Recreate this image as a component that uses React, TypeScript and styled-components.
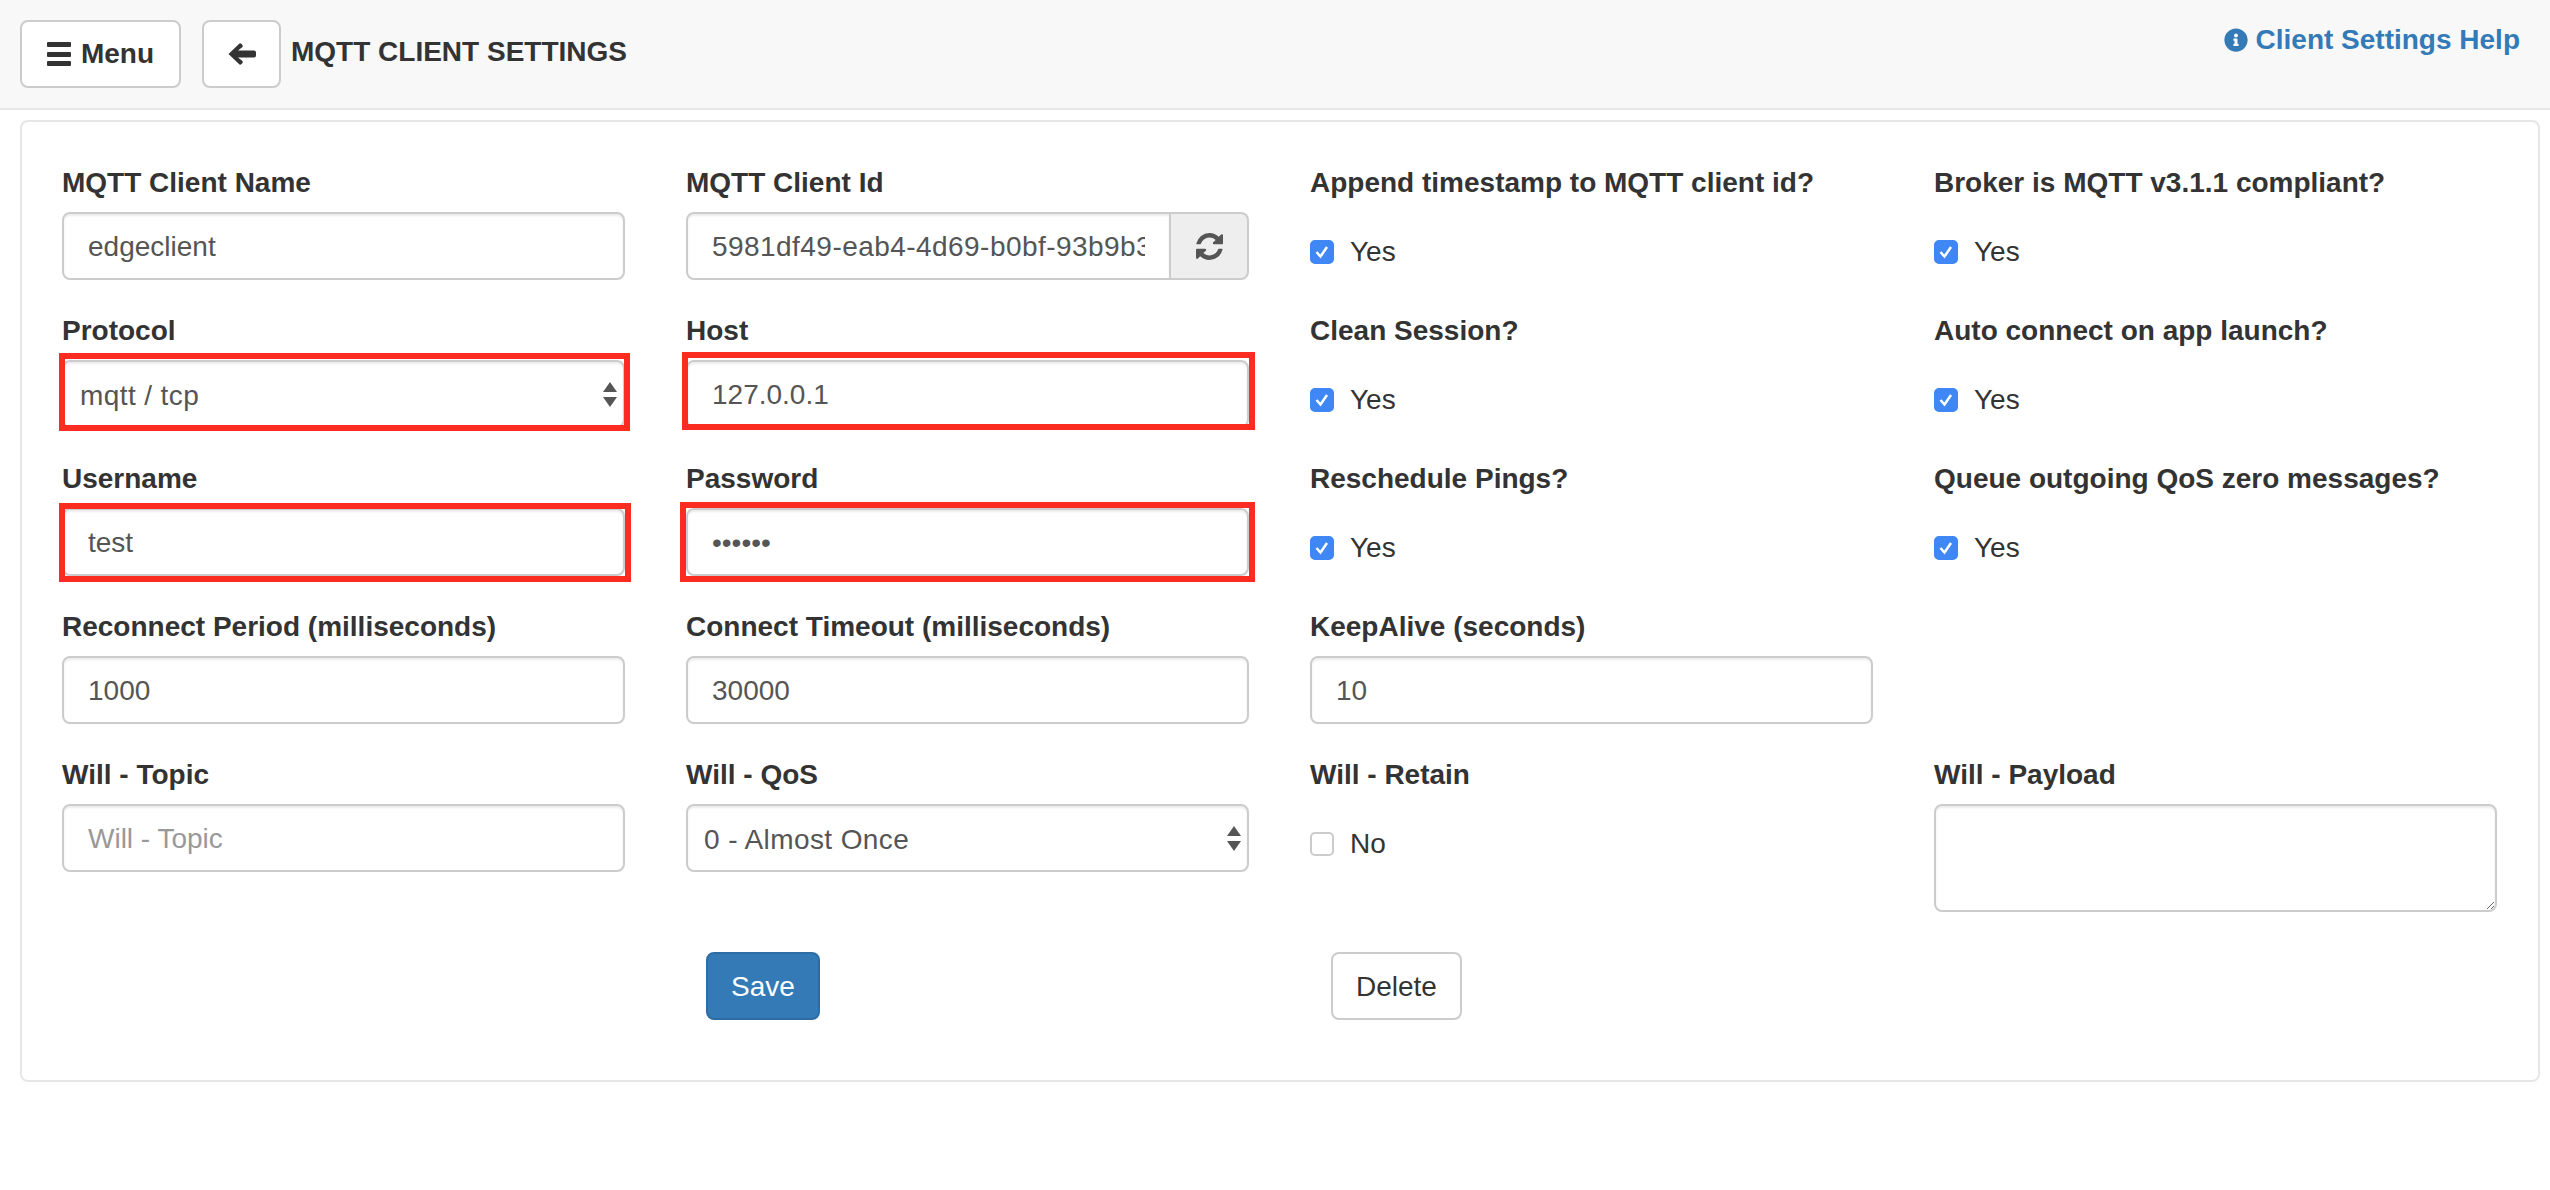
import React from "react";
import styled, { createGlobalStyle } from "styled-components";
import { FaInfoCircle } from "react-icons/fa";

const GlobalStyle = createGlobalStyle`
  html, body {
    margin: 0;
    background: #fff;
    font-family: "Liberation Sans", Arial, sans-serif;
    font-size: 28px;
    color: #333;
  }
  * { box-sizing: border-box; }
`;

const Header = styled.header`
  display: flex;
  align-items: flex-start;
  height: 110px;
  padding: 20px 30px 0 20px;
  background: #f8f8f8;
  border-bottom: 2px solid #e7e7e7;
`;

const NavButton = styled.button<{ $width: number; $gap: number }>`
  display: flex;
  align-items: center;
  justify-content: center;
  gap: 10px;
  width: ${(p) => p.$width}px;
  height: 68px;
  margin-right: ${(p) => p.$gap}px;
  padding: 0;
  background: #fff;
  border: 2px solid #ccc;
  border-radius: 8px;
  color: #333;
  font: bold 28px "Liberation Sans", Arial, sans-serif;
`;

const Title = styled.h1`
  margin: 0;
  font-size: 28px;
  line-height: 64px;
  font-weight: bold;
  color: #333;
`;

const HelpLink = styled.a`
  display: flex;
  align-items: center;
  gap: 8px;
  margin-left: auto;
  line-height: 40px;
  font-weight: bold;
  color: #337ab7;
  text-decoration: none;
`;

const Card = styled.main`
  margin: 10px 10px 0 20px;
  padding: 40px 41px 60px 40px;
  border: 2px solid #e6e6e6;
  border-radius: 8px;
`;

const FormGrid = styled.div`
  display: grid;
  grid-template-columns: repeat(4, 1fr);
  column-gap: 61px;
`;

const Field = styled.div`
  margin-bottom: 30px;
`;

const Label = styled.label`
  display: block;
  margin-bottom: 8px;
  font-weight: bold;
  line-height: 42px;
  white-space: nowrap;
`;

const Control = styled.div`
  position: relative;
  display: flex;
`;

const TextInput = styled.input<{ $joined?: boolean }>`
  display: block;
  flex: 1;
  min-width: 0;
  width: 100%;
  height: 68px;
  padding: 13px 24px 11px;
  background: #fff;
  border: 2px solid #ccc;
  border-radius: ${(p) => (p.$joined ? "8px 0 0 8px" : "8px")};
  box-shadow: inset 0 2px 2px rgba(0, 0, 0, 0.075);
  color: #555;
  font: 28px "Liberation Sans", Arial, sans-serif;
  letter-spacing: ${(p) => (p.$joined ? "0.45px" : "normal")};
  outline: none;
  &::placeholder { color: #999; opacity: 1; }
`;

const Select = styled.select`
  display: block;
  width: 100%;
  height: 68px;
  padding: 13px 40px 11px 16px;
  appearance: none;
  background: #fff;
  border: 2px solid #ccc;
  border-radius: 8px;
  box-shadow: inset 0 2px 2px rgba(0, 0, 0, 0.075);
  color: #555;
  font: 28px "Liberation Sans", Arial, sans-serif;
  letter-spacing: 0.4px;
  outline: none;
`;

const SelectArrows = styled.svg`
  position: absolute;
  top: 22px;
  right: 8px;
  width: 14px;
  height: 25px;
  fill: #555;
  pointer-events: none;
`;

const Addon = styled.span`
  display: flex;
  align-items: center;
  justify-content: center;
  flex: 0 0 78px;
  background: #eee;
  border: 2px solid #ccc;
  border-left: 0;
  border-radius: 0 8px 8px 0;
  color: #555;
`;

const Textarea = styled.textarea`
  display: block;
  width: 100%;
  height: 108px;
  padding: 12px 24px;
  background: #fff;
  border: 2px solid #ccc;
  border-radius: 8px;
  box-shadow: inset 0 2px 2px rgba(0, 0, 0, 0.075);
  font: 28px "Liberation Sans", Arial, sans-serif;
  outline: none;
`;

const CheckRow = styled.div`
  display: flex;
  align-items: center;
  gap: 16px;
  height: 40px;
  margin-top: 28px;
  line-height: 40px;
`;

const CheckBox = styled.span<{ $checked: boolean }>`
  display: flex;
  align-items: center;
  justify-content: center;
  width: 24px;
  height: 24px;
  background: ${(p) => (p.$checked ? "#3f87f5" : "#fff")};
  border: 2px solid ${(p) => (p.$checked ? "#3f87f5" : "#ccc")};
  border-radius: 5px;
`;

// red annotation rectangle drawn over the screenshot's required fields
const Marker = styled.span<{ $top: number; $right: number; $bottom: number; $left: number }>`
  position: absolute;
  top: ${(p) => p.$top}px;
  right: ${(p) => p.$right}px;
  bottom: ${(p) => p.$bottom}px;
  left: ${(p) => p.$left}px;
  border: 6px solid #fc2d20;
  pointer-events: none;
`;

const ActionCell = styled.div<{ $offset: number }>`
  margin-top: 10px;
  padding-left: ${(p) => p.$offset}px;
`;

const ActionButton = styled.button<{ $primary?: boolean }>`
  height: 68px;
  padding: 2px 23px 0;
  background: ${(p) => (p.$primary ? "#337ab7" : "#fff")};
  border: 2px solid ${(p) => (p.$primary ? "#2e6da4" : "#ccc")};
  border-radius: 8px;
  color: ${(p) => (p.$primary ? "#fff" : "#333")};
  font: 28px "Liberation Sans", Arial, sans-serif;
`;

const BarsIcon = () => (
  <svg width="24" height="24" viewBox="0 0 24 24" fill="#333">
    <rect y="0" width="24" height="5" rx="1" />
    <rect y="10" width="24" height="5" rx="1" />
    <rect y="19" width="24" height="5" rx="1" />
  </svg>
);

const BackIcon = () => (
  <svg width="28" height="22" viewBox="0 0 28 22" fill="#333">
    <path d="M0.5 11 11.5 0.5Q12.5 0 13.5 1L14.5 2Q15 3 14.5 4L10 7.5H26Q28 7.5 28 9.5V12.5Q28 14.5 26 14.5H10L14.5 18Q15 19 14.5 20L13.5 21Q12.5 22 11.5 21.5Z" />
  </svg>
);

const RefreshIcon = () => (
  <svg width="27" height="27" viewBox="0 0 1536 1536" fill="#555">
    <path d="M1511 928q0 5-1 7-64 268-268 434.5t-478 166.5q-146 0-282.5-55t-243.5-157l-129 129q-19 19-45 19t-45-19-19-45v-448q0-26 19-45t45-19h448q26 0 45 19t19 45-19 45l-137 137q71 66 161 102t187 36q134 0 250-65t186-179q11-17 53-117 8-23 30-23h192q13 0 22.5 9.5t9.5 22.5zm25-800v448q0 26-19 45t-45 19h-448q-26 0-45-19t-19-45 19-45l138-138q-148-137-349-137-134 0-250 65t-186 179q-11 17-53 117-8 23-30 23h-199q-13 0-22.5-9.5t-9.5-22.5v-7q65-268 270-434.5t480-166.5q146 0 284 55.5t245 156.5l130-129q19-19 45-19t45 19 19 45z" />
  </svg>
);

const Arrows = () => (
  <SelectArrows viewBox="0 0 14 25">
    <path d="M7 0 14 10H0Z" />
    <path d="M0 15H14L7 25Z" />
  </SelectArrows>
);

const Check = ({ label, checked = true }: { label: string; checked?: boolean }) => (
  <CheckRow>
    <CheckBox $checked={checked}>
      {checked && (
        <svg width="20" height="20" viewBox="0 0 20 20" fill="none" stroke="#fff" strokeWidth="2.5">
          <path d="M4.5 10 8.5 14.5 15 5" />
        </svg>
      )}
    </CheckBox>
    {label}
  </CheckRow>
);

const TextField = ({ label, value, placeholder }: { label: string; value?: string; placeholder?: string }) => (
  <Field>
    <Label>{label}</Label>
    <TextInput defaultValue={value} placeholder={placeholder} />
  </Field>
);

const CheckField = ({ label, text, checked }: { label: string; text: string; checked?: boolean }) => (
  <Field>
    <Label>{label}</Label>
    <Check label={text} checked={checked} />
  </Field>
);

const App = () => {
  return (
    <>
      <GlobalStyle />
      <Header>
        <NavButton $width={161} $gap={21}>
          <BarsIcon />
          Menu
        </NavButton>
        <NavButton $width={79} $gap={10}>
          <BackIcon />
        </NavButton>
        <Title>MQTT CLIENT SETTINGS</Title>
        <HelpLink href="#">
          <FaInfoCircle size={24} />
          Client Settings Help
        </HelpLink>
      </Header>
      <Card>
        <FormGrid>
          <TextField label="MQTT Client Name" value="edgeclient" />
          <Field>
            <Label>MQTT Client Id</Label>
            <Control>
              <TextInput $joined defaultValue="5981df49-eab4-4d69-b0bf-93b9b3" />
              <Addon>
                <RefreshIcon />
              </Addon>
            </Control>
          </Field>
          <CheckField label="Append timestamp to MQTT client id?" text="Yes" />
          <CheckField label="Broker is MQTT v3.1.1 compliant?" text="Yes" />

          <Field>
            <Label>Protocol</Label>
            <Control>
              <Select defaultValue="mqtt">
                <option value="mqtt">mqtt / tcp</option>
              </Select>
              <Arrows />
              <Marker $top={-7} $right={-5} $bottom={-3} $left={-3} />
            </Control>
          </Field>
          <Field>
            <Label>Host</Label>
            <Control>
              <TextInput defaultValue="127.0.0.1" />
              <Marker $top={-8} $right={-6} $bottom={-2} $left={-4} />
            </Control>
          </Field>
          <CheckField label="Clean Session?" text="Yes" />
          <CheckField label="Auto connect on app launch?" text="Yes" />

          <Field>
            <Label>Username</Label>
            <Control>
              <TextInput defaultValue="test" />
              <Marker $top={-5} $right={-6} $bottom={-6} $left={-3} />
            </Control>
          </Field>
          <Field>
            <Label>Password</Label>
            <Control>
              <TextInput type="password" defaultValue="secret" />
              <Marker $top={-6} $right={-6} $bottom={-6} $left={-6} />
            </Control>
          </Field>
          <CheckField label="Reschedule Pings?" text="Yes" />
          <CheckField label="Queue outgoing QoS zero messages?" text="Yes" />

          <TextField label="Reconnect Period (milliseconds)" value="1000" />
          <TextField label="Connect Timeout (milliseconds)" value="30000" />
          <TextField label="KeepAlive (seconds)" value="10" />
          <div />

          <TextField label="Will - Topic" placeholder="Will - Topic" />
          <Field>
            <Label>Will - QoS</Label>
            <Control>
              <Select defaultValue="0">
                <option value="0">0 - Almost Once</option>
              </Select>
              <Arrows />
            </Control>
          </Field>
          <CheckField label="Will - Retain" text="No" checked={false} />
          <Field>
            <Label>Will - Payload</Label>
            <Textarea />
          </Field>

          <div />
          <ActionCell $offset={20}>
            <ActionButton $primary>Save</ActionButton>
          </ActionCell>
          <ActionCell $offset={21}>
            <ActionButton>Delete</ActionButton>
          </ActionCell>
        </FormGrid>
      </Card>
    </>
  );
};

export default App;
